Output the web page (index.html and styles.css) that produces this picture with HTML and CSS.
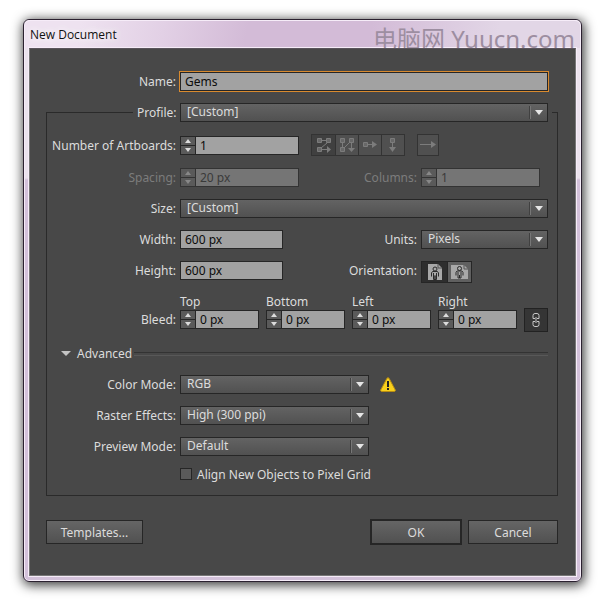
FILE: index.html
```
<!DOCTYPE html>
<html lang="en">

<head>
    <meta charset="UTF-8" />
    <meta name="viewport" content="width=device-width, initial-scale=1.0" />
    <title>New Document</title>
    <link rel="stylesheet" href="styles.css">
</head>

<body>

    <form class="window" onsubmit="return false">
        <header class="titlebar">
            <h1>New Document</h1>
            <span class="watermark" lang="zh">电脑网 Yuucn.com</span>
        </header>

        <div class="panel">
            <div class="row name-row">
                <label for="name">Name:</label>
                <input class="field name" id="name" type="text" value="Gems" />
            </div>

            <fieldset class="group">
                <legend>
                    <label for="profile">Profile:</label>
                    <span class="select grow">
                        <select id="profile"><option>[Custom]</option></select>
                    </span>
                </legend>

                <div class="row row-tall">
                    <label for="artboards">Number of Artboards:</label>
                    <span class="stepper">
                        <button type="button" class="up" aria-label="More artboards"></button>
                        <button type="button" class="down" aria-label="Fewer artboards"></button>
                        <input id="artboards" type="text" value="1" />
                    </span>
                    <div class="toolbar">
                        <button type="button" class="tool pressed" disabled aria-label="Grid by row">
                            <svg width="16" height="16" viewBox="0 0 16 16"><path class="box" d="M1.500 1.500h4v4h-4zM10.500 1.500h4v4h-4zM1.500 10.500h4v4h-4z" /><path d="M6 3.500h4M11 6l-6 5M6 12.500h6" /><path class="tip" d="M11 9l4 3.500l-4 3.500z" /></svg>
                        </button>
                        <button type="button" class="tool" disabled aria-label="Grid by column">
                            <svg width="16" height="16" viewBox="0 0 16 16"><path class="box" d="M1.500 1.500h4v4h-4zM10.500 1.500h4v4h-4zM1.500 10.500h4v4h-4z" /><path d="M3.500 6v4M5 11l6-6M12.500 6v6" /><path class="tip" d="M9 11h7l-3.500 4z" /></svg>
                        </button>
                        <button type="button" class="tool" disabled aria-label="Arrange by row">
                            <svg width="16" height="16" viewBox="0 0 16 16"><path class="box" d="M1.500 5.500h4v4h-4z" /><path d="M6 7.500h5" /><path class="tip" d="M10 4l5 3.500l-5 3.500z" /></svg>
                        </button>
                        <button type="button" class="tool" disabled aria-label="Arrange by column">
                            <svg width="16" height="16" viewBox="0 0 16 16"><path class="box" d="M5.500 1.500h4v4h-4z" /><path d="M7.500 6v5" /><path class="tip" d="M4 10h7l-3.500 5z" /></svg>
                        </button>
                    </div>
                    <button type="button" class="tool single" disabled aria-label="Change to right-to-left layout">
                        <svg width="18" height="16" viewBox="0 0 18 16"><path d="M1 7.500h14" /><path class="tip" d="M12 4l5 3.500l-5 3.500z" /></svg>
                    </button>
                </div>

                <div class="row">
                    <label class="off" for="spacing">Spacing:</label>
                    <span class="stepper off">
                        <button type="button" class="up" disabled aria-label="More spacing"></button>
                        <button type="button" class="down" disabled aria-label="Less spacing"></button>
                        <input id="spacing" type="text" value="20 px" disabled />
                    </span>
                    <div class="side">
                        <label class="off" for="columns">Columns:</label>
                        <span class="stepper off">
                            <button type="button" class="up" disabled aria-label="More columns"></button>
                            <button type="button" class="down" disabled aria-label="Fewer columns"></button>
                            <input id="columns" type="text" value="1" disabled />
                        </span>
                    </div>
                </div>

                <div class="row">
                    <label for="size">Size:</label>
                    <span class="select grow">
                        <select id="size"><option>[Custom]</option></select>
                    </span>
                </div>

                <div class="row">
                    <label for="width">Width:</label>
                    <input class="field" id="width" type="text" value="600 px" />
                    <div class="side">
                        <label for="units">Units:</label>
                        <span class="select">
                            <select id="units"><option>Pixels</option></select>
                        </span>
                    </div>
                </div>

                <div class="row row-top">
                    <label for="height">Height:</label>
                    <input class="field" id="height" type="text" value="600 px" />
                    <div class="side">
                        <span class="label" id="orientation">Orientation:</span>
                        <div class="orientation" role="group" aria-labelledby="orientation">
                            <button type="button" class="pressed" aria-label="Portrait">
                                <svg width="14" height="16" viewBox="0 0 14 16"><path class="page" d="M0 0h10l4 4v12h-14z" /><path class="fold" d="M10 0v4h4" /><path class="man" d="M7 3a2 2 0 0 1 0 4a2 2 0 0 1 0-4zM3.500 12.500v-3.500l1-1.500h5l1 1.500v3.500M5.500 9v6.500h1.500v-4v4h1.500v-6.500" /></svg>
                            </button>
                            <button type="button" aria-label="Landscape">
                                <svg width="17" height="14" viewBox="0 0 17 14"><path class="page" d="M0 0h13l4 4v10h-17z" /><path class="fold" d="M13 0v4h4" /><path class="man" d="M8.500 1.500a2 2 0 0 1 0 4a2 2 0 0 1 0-4zM5 10.500v-3l1-1.500h5l1 1.500v3M7 7v6h1.500v-3v3h1.500v-6" /></svg>
                            </button>
                        </div>
                    </div>
                </div>

                <div class="bleed">
                    <span class="label">Bleed:</span>
                    <div class="bleed-field">
                        <label for="top">Top</label>
                        <span class="stepper">
                            <button type="button" class="up" aria-label="Increase top"></button>
                            <button type="button" class="down" aria-label="Decrease top"></button>
                            <input id="top" type="text" value="0 px" />
                        </span>
                    </div>
                    <div class="bleed-field">
                        <label for="bottom">Bottom</label>
                        <span class="stepper">
                            <button type="button" class="up" aria-label="Increase bottom"></button>
                            <button type="button" class="down" aria-label="Decrease bottom"></button>
                            <input id="bottom" type="text" value="0 px" />
                        </span>
                    </div>
                    <div class="bleed-field">
                        <label for="left">Left</label>
                        <span class="stepper">
                            <button type="button" class="up" aria-label="Increase left"></button>
                            <button type="button" class="down" aria-label="Decrease left"></button>
                            <input id="left" type="text" value="0 px" />
                        </span>
                    </div>
                    <div class="bleed-field">
                        <label for="right">Right</label>
                        <span class="stepper">
                            <button type="button" class="up" aria-label="Increase right"></button>
                            <button type="button" class="down" aria-label="Decrease right"></button>
                            <input id="right" type="text" value="0 px" />
                        </span>
                    </div>
                    <button type="button" class="link" aria-label="Make all settings the same">
                        <svg width="10" height="16" viewBox="0 0 10 16"><path d="M2 6.500v-3a2 2 0 0 1 2-2h2a2 2 0 0 1 2 2v3h-2M2 6.500h2M2 9.500v3a2 2 0 0 0 2 2h2a2 2 0 0 0 2-2v-3h-2M2 9.500h2M5 5v6" /></svg>
                    </button>
                </div>

                <button type="button" class="advanced">Advanced</button>

                <div class="row">
                    <label for="color">Color Mode:</label>
                    <span class="select">
                        <select id="color"><option>RGB</option></select>
                    </span>
                    <svg class="warning" width="16" height="15" viewBox="0 0 16 15"><path fill="#f8d01c" stroke="#b98d12" d="M7 1.200q1-1 2 0l6.300 11.800q.3 1.200-.8 1.500h-13q-1.100-.3-.8-1.500z" /><path fill="#222" d="M7 4h2v6h-2zM7 11h2v2h-2z" /></svg>
                </div>

                <div class="row">
                    <label for="raster">Raster Effects:</label>
                    <span class="select">
                        <select id="raster"><option>High (300 ppi)</option></select>
                    </span>
                </div>

                <div class="row">
                    <label for="preview">Preview Mode:</label>
                    <span class="select">
                        <select id="preview"><option>Default</option></select>
                    </span>
                </div>

                <div class="check">
                    <input id="align" type="checkbox" />
                    <label for="align">Align New Objects to Pixel Grid</label>
                </div>
            </fieldset>

            <footer class="actions">
                <button type="button" class="btn">Templates...</button>
                <button type="submit" class="btn btn-default">OK</button>
                <button type="button" class="btn btn-cancel">Cancel</button>
            </footer>
        </div>
    </form>

</body>

</html>
```

FILE: styles.css
```
* {
    box-sizing: border-box;
}

body {
    margin: 0;
    padding: 19px 18px 18px 23px;
    background: #fff;
    color: #dcdcdc;
    font: 12px/19px "Noto Sans", "Noto Sans CJK SC", sans-serif;
}

input,
select,
button {
    margin: 0;
    padding: 0;
    border: 0;
    border-radius: 0;
    font: inherit;
    color: inherit;
    appearance: none;
    outline: none;
}

/* window frame */
.window {
    padding: 0 5px 5px;
    border: 1px solid #2b2130;
    border-radius: 6px;
    background: linear-gradient(#ebe2ed 158px, #d3c1da 160px);
    box-shadow: inset 0 0 0 1px #f6ecf8, 1px 2px 12px 1px rgba(0, 0, 0, 0.8);
}

.titlebar {
    display: flex;
    justify-content: space-between;
    height: 28px;
    margin: 0 -4px;
    padding: 0 5px;
    border-top: 1px solid #f6ecf8;
    border-radius: 5px 5px 0 0;
    background: linear-gradient(100deg, #eee2f0 10%, #e2d0e5 25%, #d3bbd7 40%, #d3bbd7 62%, #e2d6e6 85%);
    overflow: hidden;
    white-space: nowrap;
}

h1 {
    margin: 0;
    font: 12px/27px "Open Sans", sans-serif;
    color: #111;
    text-shadow: 0 0 8px #fff, 0 0 8px #fff;
}

.watermark {
    font: 24px/36px "Noto Sans", "Noto Sans CJK SC", sans-serif;
    color: #9d8ea1;
}

.panel {
    padding: 23px 17px 30px 16px;
    border: 1px solid #777;
    border-top-color: #5a545b;
    background: #484848;
    box-shadow: 0 0 0 1px #f6ecf8;
}

/* rows */
.row {
    display: flex;
    align-items: center;
    margin-bottom: 12px;
}

.row > label {
    width: 129px;
    margin-right: 4px;
    text-align: right;
}

.name-row {
    padding-right: 10px;
}

.name-row > label {
    width: 130px;
}

.row-tall {
    height: 22px;
}

.row-top {
    height: 22px;
    align-items: flex-start;
}

.side {
    display: flex;
    align-items: inherit;
    flex: 1;
}

.side > label,
.side > .label {
    flex: 1;
    margin-right: 4px;
    text-align: right;
}

.side > .select {
    width: 127px;
}

.side > .stepper {
    margin-right: 8px;
}

label.off {
    color: #7c7c7c;
}

/* text fields */
.field {
    width: 103px;
    height: 19px;
    padding: 0 4px;
    border: 1px solid #262626;
    background: #a2a2a2;
    color: #0c0c0c;
}

.name {
    flex: 1;
    outline: 1px solid #d98a2e;
}

.stepper {
    display: grid;
    grid-template: 1fr 1fr / 14px 1fr;
    gap: 1px;
    width: 119px;
    height: 19px;
    border: 1px solid #262626;
    background: #262626;
}

.stepper input {
    grid-area: 1 / 2 / 3 / 3;
    width: 100%;
    padding: 0 4px;
    background: #a2a2a2;
    color: #0c0c0c;
    line-height: 17px;
}

.stepper button {
    display: grid;
    place-items: center;
    grid-column: 1;
    background: #5a5a5a;
}

.stepper button::before {
    content: "";
    border: 3px solid transparent;
}

.stepper .up::before {
    border-top: 0;
    border-bottom: 4px solid #dcdcdc;
}

.stepper .down::before {
    border-bottom: 0;
    border-top: 4px solid #dcdcdc;
}

.stepper.off {
    border-color: #333;
    background: #333;
}

.stepper.off input {
    background: #757575;
    color: #3a3a3a;
}

.stepper.off .up::before {
    border-bottom-color: #888;
}

.stepper.off .down::before {
    border-top-color: #888;
}

/* drop-downs */
.select {
    position: relative;
    width: 189px;
    height: 19px;
}

.select.grow {
    flex: 1;
}

.select select {
    display: block;
    width: 100%;
    height: 19px;
    padding: 0 24px 2px 6px;
    border: 1px solid #262626;
    background: linear-gradient(#636363, #515151);
    line-height: 15px;
}

.select::before {
    content: "";
    position: absolute;
    top: 3px;
    right: 17px;
    height: 13px;
    border-left: 1px solid #404040;
    border-right: 1px solid #777;
    pointer-events: none;
}

.select::after {
    content: "";
    position: absolute;
    top: 7px;
    right: 5px;
    border: 4px solid transparent;
    border-top: 5px solid #e6e6e6;
    border-bottom: 0;
    pointer-events: none;
}

/* profile group */
.group {
    min-width: 0;
    margin: 0;
    padding: 12px 9px 15px 0;
    border: 1px solid #2a2a2a;
}

.group legend {
    display: flex;
    width: calc(100% - 82px);
    height: 19px;
    margin-left: 86px;
    padding: 0 4px;
}

.group legend label {
    width: 39px;
    margin-right: 4px;
    text-align: right;
    white-space: nowrap;
}

/* artboard layout buttons */
.toolbar {
    display: flex;
    margin: 0 12px;
    border: 1px solid #333;
}

.tool {
    display: grid;
    place-items: center;
    width: 23px;
    height: 20px;
    border-left: 1px solid #333;
    background: #505050;
}

.tool:first-child {
    border-left: 0;
}

.tool.pressed {
    background: #404040;
}

.tool.single {
    width: 22px;
    height: 22px;
    border: 1px solid #333;
}

.tool svg {
    fill: none;
    stroke: #7c7c7c;
}

.tool .box {
    fill: #686868;
}

.tool .tip {
    fill: #7c7c7c;
    stroke: none;
}

.orientation {
    display: flex;
    width: 127px;
}

.orientation button {
    display: grid;
    place-items: center;
    width: 25px;
    height: 22px;
    border: 1px solid #262626;
    background: #606060;
}

.orientation .pressed {
    width: 26px;
    border-right: 0;
    background: #2e2e2e;
}

.page {
    fill: #a8a8a8;
}

.fold {
    fill: none;
    stroke: #555;
}

.man {
    fill: none;
    stroke: #2a2a2a;
}

/* bleed */
.bleed {
    display: flex;
    align-items: flex-end;
    gap: 7px;
    margin-bottom: 12px;
}

.bleed > .label {
    width: 129px;
    margin-right: -3px;
    padding-bottom: 3px;
    text-align: right;
}

.bleed-field {
    display: grid;
    gap: 2px;
    padding-bottom: 3px;
}

.bleed-field label {
    line-height: 13px;
}

.bleed .stepper {
    width: 79px;
}

.bleed .link {
    display: grid;
    place-items: center;
    width: 24px;
    height: 24px;
    border: 1px solid #222;
    background: #353535;
}

.link svg {
    fill: none;
    stroke: #c8c8c8;
}

/* advanced */
.advanced {
    display: flex;
    align-items: center;
    width: 100%;
    margin-bottom: 12px;
    padding-left: 14px;
    background: none;
}

.advanced::before {
    content: "";
    margin-right: 6px;
    border: 5px solid transparent;
    border-top-color: #c4c4c4;
    border-bottom: 0;
}

.advanced::after {
    content: "";
    flex: 1;
    height: 2px;
    margin-left: 2px;
    border-top: 1px solid #333;
    border-bottom: 1px solid #585858;
}

.warning {
    margin-left: 11px;
}

.check {
    display: flex;
    align-items: center;
    gap: 5px;
    height: 12px;
    padding-left: 133px;
}

.check input {
    width: 12px;
    height: 12px;
    border: 1px solid #262626;
    background: #5a5a5a;
}

/* bottom buttons */
.actions {
    display: flex;
    align-items: center;
    margin-top: 23px;
}

.btn {
    width: 97px;
    height: 24px;
    border: 1px solid #262626;
    background: linear-gradient(#656565, #515151);
}

.btn-default {
    width: 92px;
    height: 26px;
    margin: 0 6px 0 auto;
    border-width: 2px;
}

.btn-cancel {
    width: 90px;
}
```
